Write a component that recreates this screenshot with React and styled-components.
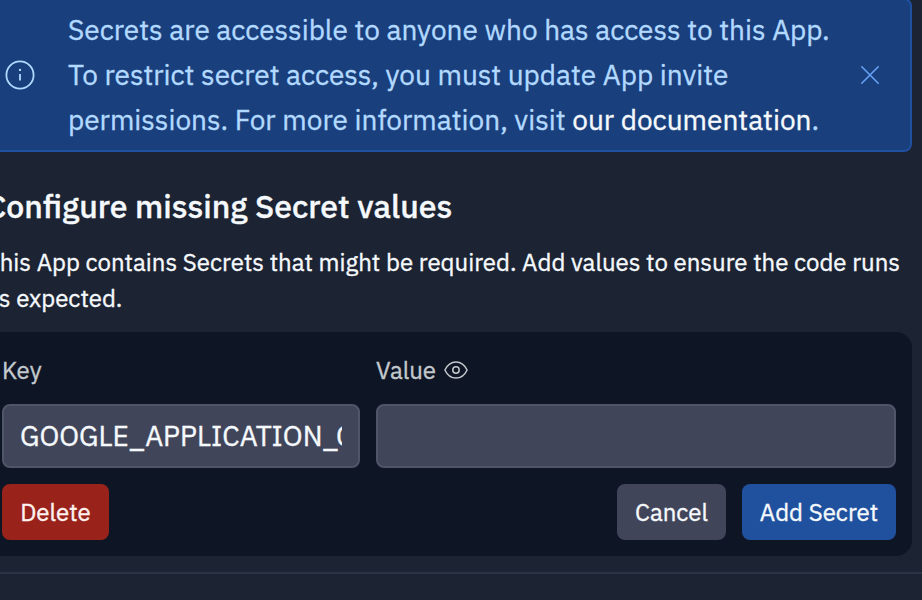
import React from "react";
import styled, { createGlobalStyle } from "styled-components";

const GlobalStyle = createGlobalStyle`
  *, *::before, *::after { box-sizing: border-box; }
  body {
    margin: 0;
    overflow: hidden;
    background: #1c2333;
    color: #f5f9fc;
    font-family: "IBM Plex Sans", Roboto, sans-serif;
    font-size: 24px;
    line-height: 36px;
    -webkit-text-stroke: 0.35px currentColor;
  }
  h2, p { margin: 0; }
  svg { display: block; flex: none; fill: none; stroke: currentColor; }
`;

const Page = styled.main`
  height: 600px;
  overflow: hidden;
`;

const Pane = styled.div`
  display: flex;
  flex-direction: column;
  width: 926px;
  margin-left: -14px;
`;

const Banner = styled.aside`
  display: flex;
  align-items: center;
  height: 154px;
  margin-top: -2px;
  padding: 8px 24px 8px 16px;
  border: 2px solid #1f4f9f;
  border-radius: 8px;
  background: #193f7c;
  color: #b2d9ff;
`;

const BannerText = styled.p`
  flex: 1;
  margin-left: 32px;
  padding-bottom: 2px;
  font-size: 28px;
  line-height: 45px;
  white-space: nowrap;
`;

const DocLink = styled.a`
  color: #f5f9fc;
`;

const CloseButton = styled.button`
  display: flex;
  padding: 0;
  border: 0;
  background: none;
  color: #66a1f5;
`;

const Title = styled.h2`
  margin-top: 34px;
  font-size: 32px;
  font-weight: 500;
  line-height: 40px;
  white-space: nowrap;
`;

const Description = styled.p`
  margin-top: 18px;
  white-space: nowrap;
`;

const Card = styled.section`
  display: flex;
  flex-direction: column;
  gap: 16px;
  margin-top: 16px;
  padding: 16px;
  border-radius: 16px;
  background: #0e1525;
`;

const Fields = styled.div`
  display: grid;
  grid-template-columns: 358px 520px;
  gap: 16px;
`;

const Field = styled.label`
  display: flex;
  flex-direction: column;
  gap: 16px;
`;

const Label = styled.span`
  display: flex;
  align-items: center;
  gap: 8px;
  height: 40px;
  padding-top: 4px;
  color: #c2c8cc;
`;

const Input = styled.input`
  width: 100%;
  height: 64px;
  padding: 0 16px 2px;
  border: 2px solid #505669;
  border-radius: 8px;
  outline: none;
  background: #41455a;
  color: #f5f9fc;
  font: 400 28px/40px "IBM Plex Sans", Roboto, sans-serif;
`;

const Actions = styled.div`
  display: flex;
  justify-content: space-between;
`;

const ActionGroup = styled.div`
  display: flex;
  gap: 16px;
`;

const tones = { danger: "#99231b", neutral: "#41455a", primary: "#20519f" };

const Button = styled.button`
  width: ${(p) => p.$width}px;
  height: 56px;
  padding: 0;
  border: 0;
  border-radius: 8px;
  background: ${(p) => tones[p.$tone]};
  color: ${(p) => (p.$tone === "danger" ? "#fff2f0" : "#f5f9fc")};
  font: inherit;
  white-space: nowrap;
`;

const Divider = styled.hr`
  width: 100%;
  height: 2px;
  margin: 16px 0 0;
  border: 0;
  background: #2b3245;
`;

const InfoIcon = () => (
  <svg width="32" height="32" viewBox="0 0 32 32" strokeWidth="1.8">
    <circle cx="16" cy="16" r="13.6" />
    <path d="M16 15v6.4" />
    <circle cx="16" cy="10.9" r="1.2" fill="currentColor" stroke="none" />
  </svg>
);

const CloseIcon = () => (
  <svg width="32" height="32" viewBox="0 0 32 32" strokeWidth="1.6" strokeLinecap="round">
    <path d="M7.8 7.8l16.4 16.4M24.2 7.8L7.8 24.2" />
  </svg>
);

const EyeIcon = () => (
  <svg width="24" height="24" viewBox="0 0 24 24" strokeWidth="1.5" strokeLinejoin="round">
    <path d="M.9 12C3.4 6.6 7.2 3.9 12 3.9S20.6 6.6 23.1 12C20.6 17.4 16.8 20.1 12 20.1S3.4 17.4.9 12Z" />
    <circle cx="12" cy="12" r="3.2" />
  </svg>
);

export default function App() {
  return (
    <Page>
      <GlobalStyle />
      <Pane>
        <Banner>
          <InfoIcon />
          <BannerText>
            Secrets are accessible to anyone who has access to this App.
            <br />
            To restrict secret access, you must update App invite
            <br />
            permissions. For more information, visit <DocLink>our documentation</DocLink>.
          </BannerText>
          <CloseButton aria-label="Dismiss">
            <CloseIcon />
          </CloseButton>
        </Banner>
        <Title>Configure missing Secret values</Title>
        <Description>
          This App contains Secrets that might be required. Add values to ensure the code runs
          <br />
          as expected.
        </Description>
        <Card>
          <Fields>
            <Field>
              <Label>Key</Label>
              <Input readOnly value="GOOGLE_APPLICATION_CREDENTIALS" />
            </Field>
            <Field>
              <Label>
                Value
                <EyeIcon />
              </Label>
              <Input readOnly value="" />
            </Field>
          </Fields>
          <Actions>
            <Button $tone="danger" $width={107}>Delete</Button>
            <ActionGroup>
              <Button $tone="neutral" $width={109}>Cancel</Button>
              <Button $tone="primary" $width={154}>Add Secret</Button>
            </ActionGroup>
          </Actions>
        </Card>
      </Pane>
      <Divider />
    </Page>
  );
}
